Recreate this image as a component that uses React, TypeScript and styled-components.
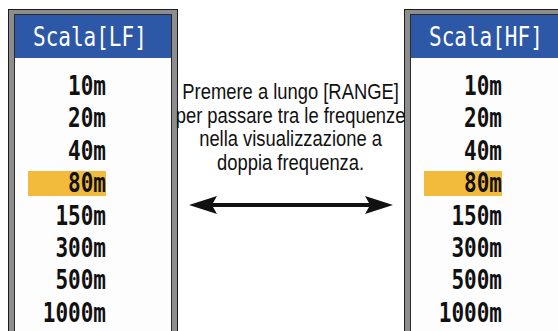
import styled, { createGlobalStyle } from 'styled-components'

const ranges = ['10m', '20m', '40m', '80m', '150m', '300m', '500m', '1000m']

const GlobalStyle = createGlobalStyle`
  html, body {
    margin: 0;
    padding: 0;
    background: #ffffff;
  }
`

const ScalePanel = ({ title, selected }: { title: string; selected: string }) => {
  return (
    <Frame>
      <Inner>
        <Header>
          <Tall>{title}</Tall>
        </Header>
        <List>
          {ranges.map((r) => (
            <Row key={r} $active={r === selected}>
              <Tall>{r}</Tall>
            </Row>
          ))}
        </List>
      </Inner>
    </Frame>
  )
}

const App = () => {
  return (
    <Page>
      <GlobalStyle />
      <ScalePanel title='Scala[LF]' selected='80m' />
      <Middle>
        <Note>
          Premere a lungo [RANGE]
          <br />
          per passare tra le frequenze
          <br />
          nella visualizzazione a
          <br />
          doppia frequenza.
        </Note>
        <Arrow width='204' height='18' viewBox='0 0 204 18'>
          <polygon points='0,9 28,0 24,7 180,7 176,0 204,9 176,18 180,11 24,11 28,18' fill='#111' />
        </Arrow>
      </Middle>
      <ScalePanel title='Scala[HF]' selected='80m' />
    </Page>
  )
}

// whole picture, right panel runs off the edge
const Page = styled.div`
  width: 558px;
  height: 331px;
  overflow: hidden;
  display: flex;
  padding-left: 8px;
  box-sizing: border-box;
`

// grey bezel round each scale window
const Frame = styled.div`
  flex: 0 0 170px;
  width: 170px;
  height: 340px;
  margin-top: 9px;
  box-sizing: border-box;
  border: 1px solid #1c1c1c;
  background: #8d8d8d;
  padding: 4px 5px 0;
`

const Inner = styled.div`
  height: 100%;
  box-sizing: border-box;
  border: 1px solid #2a2a2a;
  border-bottom: none;
  background: #fdfdfd;
`

const Header = styled.div`
  height: 43px;
  background: #2c58a7;
  color: #ffffff;
  display: flex;
  align-items: center;
  padding-left: 18px;
  font-family: 'DejaVu Sans Mono', monospace;
  font-size: 21px;
`

// the display font is tall and narrow
const Tall = styled.span`
  display: inline-block;
  transform: scaleY(1.27);
  transform-origin: center;
`

const List = styled.div`
  padding-top: 16px;
  display: flex;
  flex-direction: column;
  gap: 7.4px;
`

const Row = styled.div<{ $active: boolean }>`
  margin-left: 13px;
  width: 78px;
  height: 25px;
  line-height: 25px;
  text-align: right;
  background: ${(p) => (p.$active ? '#f2bb3b' : 'transparent')};
  color: #111;
  font-family: 'DejaVu Sans Mono', monospace;
  font-weight: bold;
  font-size: 21px;
`

const Middle = styled.div`
  flex: 0 0 226px;
  width: 226px;
  min-width: 0;
  display: flex;
  flex-direction: column;
  align-items: center;
  padding-top: 80px;
`

// narrow sans, squeezed sideways like the printed label
const Note = styled.div`
  flex-shrink: 0;
  font-family: 'Liberation Sans', Arial, sans-serif;
  font-size: 22px;
  line-height: 23.5px;
  text-align: center;
  color: #111;
  white-space: nowrap;
  transform: scaleX(0.835);
`

const Arrow = styled.svg`
  display: block;
  flex-shrink: 0;
  margin-top: 22px;
`

export default App
